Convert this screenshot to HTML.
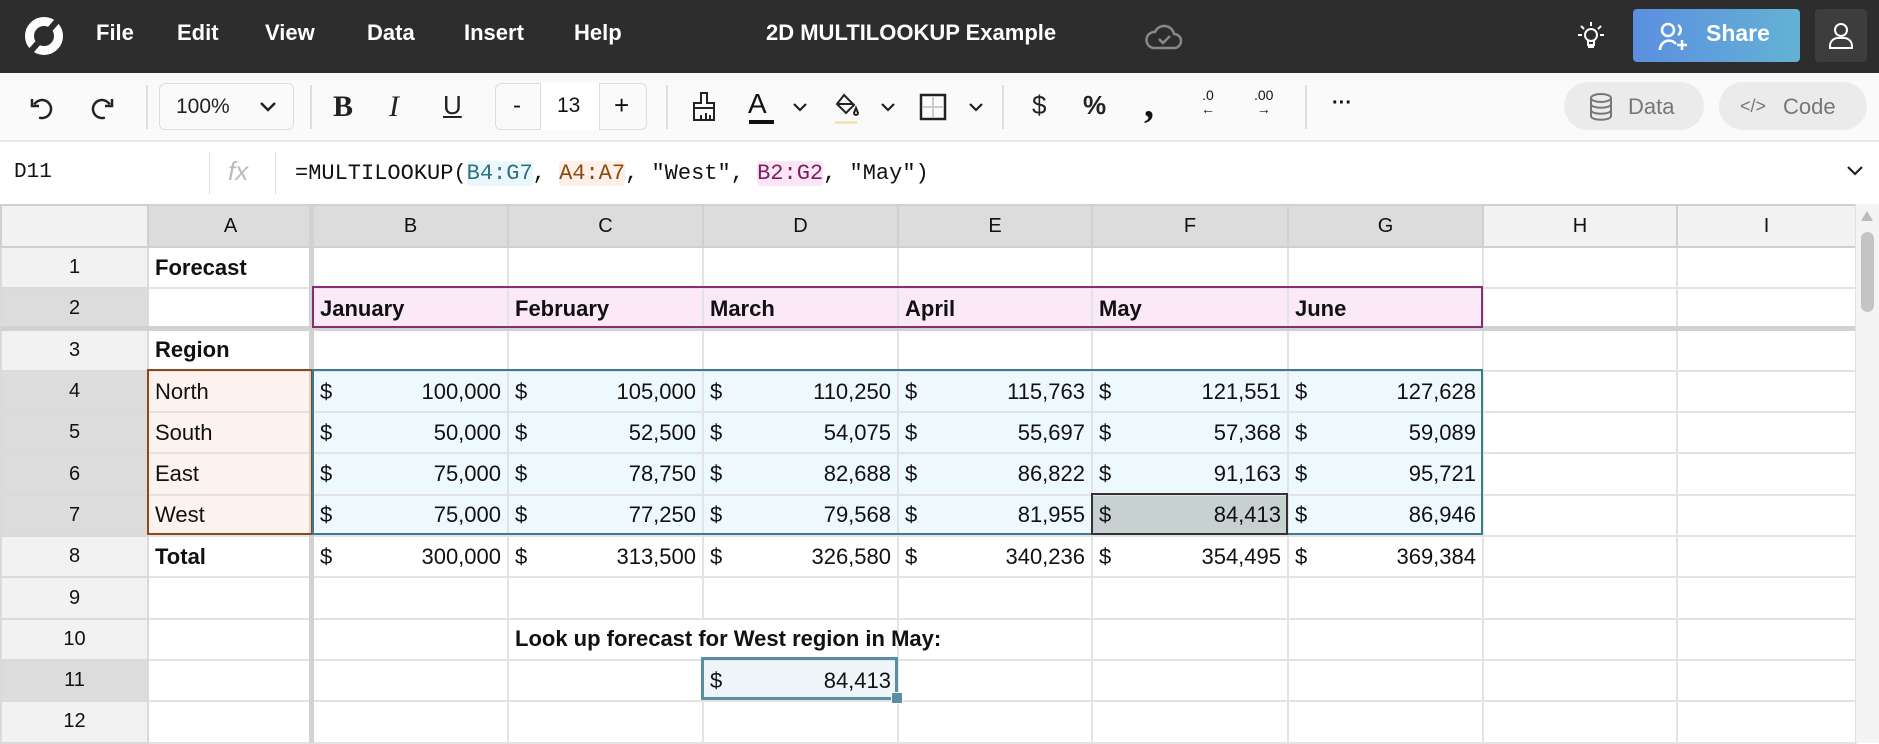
<!DOCTYPE html>
<html><head><meta charset="utf-8"><style>
*{margin:0;padding:0;box-sizing:border-box}
body{width:1879px;height:743px;overflow:hidden;background:#fff;font-family:"Liberation Sans",sans-serif;position:relative;color:#111}
.a{position:absolute}
#hdr{left:0;top:0;width:1879px;height:73px;background:#2d2d2d}
.m{top:20px;color:#fff;font-weight:bold;font-size:22px}
#tb{left:0;top:73px;width:1879px;height:69px;background:#fafafa;border-bottom:2px solid #e6e6e6}
.sep{top:85px;width:2px;height:44px;background:#dedede}
.ic{color:#222;font-size:26px}
#fb{left:0;top:142px;width:1879px;height:62px;background:#fff}
table{position:absolute;left:0;top:204px;width:1855px;border-collapse:collapse;table-layout:fixed}
td{height:41.3px;border:2px solid #e3e3e3;font-size:22px;padding:0 6px;white-space:nowrap;overflow:hidden;vertical-align:middle}
tr.h td{height:42px;background:#dcdcdc;text-align:center;font-size:20px;border-color:#d0d0d0}
td.n{background:#f2f2f2;text-align:center;font-size:20px;border-color:#dadada}
td.n.nd{background:#dcdcdc}
td.b{font-weight:bold}
td.r{text-align:right}
td.r span{float:left}
.pk td.p{background:#fce9f7}
td.o{background:#fcf3ee}
td.c{background:#edf9fc}
.ov{position:absolute;pointer-events:none}
</style></head><body>
<div id="hdr" class="a"></div>
<svg class="a" style="left:22px;top:14px" width="44" height="44" viewBox="0 0 44 44"><circle cx="22" cy="22" r="14.5" fill="none" stroke="#fff" stroke-width="9"/><line x1="36" y1="6" x2="8" y2="38" stroke="#2d2d2d" stroke-width="6"/></svg>
<div class="a m" style="left:96px">File</div>
<div class="a m" style="left:177px">Edit</div>
<div class="a m" style="left:265px">View</div>
<div class="a m" style="left:367px">Data</div>
<div class="a m" style="left:464px">Insert</div>
<div class="a m" style="left:574px">Help</div>
<div class="a m" style="left:766px">2D MULTILOOKUP Example</div>
<svg class="a" style="left:1144px;top:22px" width="40" height="30" viewBox="0 0 40 30"><path d="M10 26h20a7 7 0 0 0 0-14 10 10 0 0 0-19-2 8 8 0 0 0-1 16z" fill="none" stroke="#888" stroke-width="2.5"/><path d="M15 17l4 4 7-7" fill="none" stroke="#888" stroke-width="2.5"/></svg>
<svg class="a" style="left:1576px;top:20px" width="30" height="32" viewBox="0 0 30 32"><circle cx="15" cy="15" r="6" fill="none" stroke="#fff" stroke-width="2"/><path d="M12 21v4h6v-4M12 27h6M15 2v4M5 6l3 3M25 6l-3 3M2 15h4M24 15h4" stroke="#fff" stroke-width="2" fill="none"/></svg>
<div class="a" style="left:1633px;top:9px;width:167px;height:53px;border-radius:4px;background:linear-gradient(90deg,#5b8fe0,#63b2d3)"></div>
<svg class="a" style="left:1658px;top:22px" width="34" height="30" viewBox="0 0 34 30"><circle cx="10" cy="8" r="6" fill="none" stroke="#fff" stroke-width="2.5"/><path d="M2 28a9 9 0 0 1 16-6M20 3a6 6 0 0 1 0 10M24 18v10M19 23h10" fill="none" stroke="#fff" stroke-width="2.5"/></svg>
<div class="a" style="left:1706px;top:20px;color:#fff;font-weight:bold;font-size:23px">Share</div>
<div class="a" style="left:1815px;top:9px;width:52px;height:53px;border-radius:4px;background:#3d3d3d"></div>
<svg class="a" style="left:1828px;top:22px" width="26" height="28" viewBox="0 0 26 28"><circle cx="13" cy="8" r="6" fill="none" stroke="#fff" stroke-width="2"/><path d="M2 26v-2a8 8 0 0 1 8-8h6a8 8 0 0 1 8 8v2z" fill="none" stroke="#fff" stroke-width="2"/></svg>

<div id="tb" class="a"></div>
<svg class="a" style="left:28px;top:94px" width="28" height="28" viewBox="0 0 28 28"><path d="M8 8a9 9 0 1 1 0 14" fill="none" stroke="#222" stroke-width="2.5" transform="rotate(-20 14 14)"/><path d="M4 5v7h7" fill="none" stroke="#222" stroke-width="2.5"/></svg>
<svg class="a" style="left:88px;top:94px" width="28" height="28" viewBox="0 0 28 28"><path d="M20 8a9 9 0 1 0 0 14" fill="none" stroke="#222" stroke-width="2.5" transform="rotate(20 14 14)"/><path d="M24 5v7h-7" fill="none" stroke="#222" stroke-width="2.5"/></svg>
<div class="a sep" style="left:146px"></div>
<div class="a" style="left:159px;top:83px;width:135px;height:47px;border:1px solid #ddd;border-radius:6px;background:#fafafa"></div>
<div class="a" style="left:176px;top:95px;font-size:21px;color:#222">100%</div>
<svg class="a" style="left:258px;top:100px" width="20" height="14"><path d="M3 3l7 7 7-7" fill="none" stroke="#222" stroke-width="2.5"/></svg>
<div class="a sep" style="left:310px"></div>
<div class="a ic" style="left:333px;top:90px;font-weight:bold;font-family:'Liberation Serif',serif;font-size:30px">B</div>
<div class="a ic" style="left:389px;top:90px;font-style:italic;font-family:'Liberation Serif',serif;font-size:30px">I</div>
<div class="a ic" style="left:443px;top:90px;text-decoration:underline;font-size:26px">U</div>
<div class="a" style="left:495px;top:83px;width:152px;height:47px;border:1px solid #ddd;border-radius:6px;background:#fafafa"></div>
<div class="a" style="left:540px;top:83px;width:60px;height:47px;background:#fff;border-left:1px solid #ddd;border-right:1px solid #ddd"></div>
<div class="a" style="left:513px;top:92px;font-size:24px">-</div>
<div class="a" style="left:557px;top:94px;font-size:21px">13</div>
<div class="a" style="left:614px;top:90px;font-size:26px">+</div>
<div class="a sep" style="left:666px"></div>
<svg class="a" style="left:690px;top:91px" width="28" height="32" viewBox="0 0 28 32"><path d="M11 2h6v10h7v5H4v-5h7z M4 17v12h20V17 M11 24v5M16 22v7M20 24v5" fill="none" stroke="#222" stroke-width="2"/></svg>
<div class="a" style="left:748px;top:88px;font-size:28px">A</div>
<div class="a" style="left:749px;top:120px;width:25px;height:4px;background:#111"></div>
<svg class="a" style="left:792px;top:102px" width="16" height="12"><path d="M2 2l6 6 6-6" fill="none" stroke="#222" stroke-width="2.2"/></svg>
<svg class="a" style="left:834px;top:92px" width="26" height="28" viewBox="0 0 26 28"><path d="M10 3l10 10-8 8-9-9z M4 12h15M22 16l2 5a2 2 0 0 1-4 0z" fill="none" stroke="#222" stroke-width="2"/></svg>
<div class="a" style="left:835px;top:121px;width:22px;height:3px;background:#f5e3b5"></div>
<svg class="a" style="left:880px;top:102px" width="16" height="12"><path d="M2 2l6 6 6-6" fill="none" stroke="#222" stroke-width="2.2"/></svg>
<svg class="a" style="left:919px;top:93px" width="28" height="28"><rect x="2" y="2" width="24" height="24" fill="none" stroke="#222" stroke-width="2.5"/><path d="M14 3v22M3 14h22" stroke="#ccc" stroke-width="2"/></svg>
<svg class="a" style="left:968px;top:102px" width="16" height="12"><path d="M2 2l6 6 6-6" fill="none" stroke="#222" stroke-width="2.2"/></svg>
<div class="a sep" style="left:1002px"></div>
<div class="a ic" style="left:1032px;top:90px">$</div>
<div class="a ic" style="left:1083px;top:90px;font-weight:bold">%</div>
<div class="a" style="left:1144px;top:80px;font-size:40px;font-weight:bold;font-family:'Liberation Serif',serif">,</div>
<div class="a" style="left:1201px;top:88px;font-size:14px;line-height:14px;text-align:center">.0<br>&larr;</div>
<div class="a" style="left:1254px;top:88px;font-size:14px;line-height:14px;text-align:center">.00<br>&rarr;</div>
<div class="a sep" style="left:1305px"></div>
<div class="a" style="left:1332px;top:92px;font-size:20px;font-weight:bold">···</div>
<div class="a" style="left:1564px;top:82px;width:140px;height:48px;border-radius:24px;background:#ebebeb"></div>
<svg class="a" style="left:1587px;top:92px" width="28" height="30" viewBox="0 0 28 30"><ellipse cx="14" cy="6" rx="10" ry="4" fill="none" stroke="#777" stroke-width="2"/><path d="M4 6v18c0 5 20 5 20 0V6M4 12c0 5 20 5 20 0M4 18c0 5 20 5 20 0" fill="none" stroke="#777" stroke-width="2"/></svg>
<div class="a" style="left:1628px;top:94px;font-size:22px;color:#777">Data</div>
<div class="a" style="left:1719px;top:82px;width:148px;height:48px;border-radius:24px;background:#ebebeb"></div>
<div class="a" style="left:1740px;top:96px;font-size:18px;color:#777">&lt;/&gt;</div>
<div class="a" style="left:1783px;top:94px;font-size:22px;color:#777">Code</div>

<div id="fb" class="a"></div>
<div class="a" style="left:14px;top:161px;font-size:21px;font-family:'Liberation Mono',monospace">D11</div>
<div class="a" style="left:209px;top:152px;width:1px;height:42px;background:#ddd"></div>
<div class="a" style="left:228px;top:156px;font-size:26px;color:#bbb;font-style:italic">fx</div>
<div class="a" style="left:275px;top:152px;width:1px;height:42px;background:#ddd"></div>
<div class="a" style="left:295px;top:161px;font-size:22px;font-family:'Liberation Mono',monospace;white-space:pre">=MULTILOOKUP(<span style="background:#eaf8fc;color:#2e7185;border-radius:3px">B4:G7</span>, <span style="background:#fcf0e8;color:#8b4a10;border-radius:3px">A4:A7</span>, "West", <span style="background:#fbe6f5;color:#7c1e62;border-radius:3px">B2:G2</span>, "May")</div>
<svg class="a" style="left:1846px;top:164px" width="18" height="14"><path d="M2 3l7 7 7-7" fill="none" stroke="#222" stroke-width="2.2"/></svg>

<table>
<colgroup><col style="width:147px"><col style="width:165px"><col style="width:195px"><col style="width:195px"><col style="width:195px"><col style="width:194px"><col style="width:196px"><col style="width:195px"><col style="width:194px"><col style="width:179px"></colgroup>
<tr class="h"><td style="background:#f2f2f2"></td><td>A</td><td>B</td><td>C</td><td>D</td><td>E</td><td>F</td><td>G</td><td style="background:#f2f2f2">H</td><td style="background:#f2f2f2">I</td></tr>
<tr><td class="n">1</td><td class="b">Forecast</td><td></td><td></td><td></td><td></td><td></td><td></td><td></td><td></td></tr>
<tr class="pk"><td class="n nd">2</td><td></td><td class="b p">January</td><td class="b p">February</td><td class="b p">March</td><td class="b p">April</td><td class="b p">May</td><td class="b p">June</td><td></td><td></td></tr>
<tr><td class="n">3</td><td class="b">Region</td><td></td><td></td><td></td><td></td><td></td><td></td><td></td><td></td></tr>
<tr><td class="n nd">4</td><td class="o">North</td><td class="r c"><span>$</span>100,000</td><td class="r c"><span>$</span>105,000</td><td class="r c"><span>$</span>110,250</td><td class="r c"><span>$</span>115,763</td><td class="r c"><span>$</span>121,551</td><td class="r c"><span>$</span>127,628</td><td></td><td></td></tr>
<tr><td class="n nd">5</td><td class="o">South</td><td class="r c"><span>$</span>50,000</td><td class="r c"><span>$</span>52,500</td><td class="r c"><span>$</span>54,075</td><td class="r c"><span>$</span>55,697</td><td class="r c"><span>$</span>57,368</td><td class="r c"><span>$</span>59,089</td><td></td><td></td></tr>
<tr><td class="n nd">6</td><td class="o">East</td><td class="r c"><span>$</span>75,000</td><td class="r c"><span>$</span>78,750</td><td class="r c"><span>$</span>82,688</td><td class="r c"><span>$</span>86,822</td><td class="r c"><span>$</span>91,163</td><td class="r c"><span>$</span>95,721</td><td></td><td></td></tr>
<tr><td class="n nd">7</td><td class="o">West</td><td class="r c"><span>$</span>75,000</td><td class="r c"><span>$</span>77,250</td><td class="r c"><span>$</span>79,568</td><td class="r c"><span>$</span>81,955</td><td class="r c" style="background:#c8d1d1"><span>$</span>84,413</td><td class="r c"><span>$</span>86,946</td><td></td><td></td></tr>
<tr><td class="n">8</td><td class="b">Total</td><td class="r"><span>$</span>300,000</td><td class="r"><span>$</span>313,500</td><td class="r"><span>$</span>326,580</td><td class="r"><span>$</span>340,236</td><td class="r"><span>$</span>354,495</td><td class="r"><span>$</span>369,384</td><td></td><td></td></tr>
<tr><td class="n">9</td><td></td><td></td><td></td><td></td><td></td><td></td><td></td><td></td><td></td></tr>
<tr><td class="n">10</td><td></td><td></td><td class="b" style="overflow:visible;border-right-color:transparent">Look up forecast for West region in May:</td><td></td><td></td><td></td><td></td><td></td><td></td></tr>
<tr><td class="n nd">11</td><td></td><td></td><td></td><td class="r" style="background:#eef6f9"><span>$</span>84,413</td><td></td><td></td><td></td><td></td><td></td></tr>
<tr><td class="n">12</td><td></td><td></td><td></td><td></td><td></td><td></td><td></td><td></td><td></td></tr>
</table>
<div class="ov" style="left:309px;top:204px;width:5px;height:539px;background:#d2d2d2"></div>
<div class="ov" style="left:0;top:326px;width:1855px;height:5px;background:#d2d2d2"></div>
<div class="ov" style="left:312px;top:286px;width:1171px;height:42px;border:2px solid #8a2c70"></div>
<div class="ov" style="left:147px;top:369px;width:166px;height:166px;border:2px solid #8b4a1a"></div>
<div class="ov" style="left:312px;top:369px;width:1171px;height:166px;border:2px solid #3f7b8c"></div>
<div class="ov" style="left:1091px;top:493px;width:197px;height:42px;border:2px solid #333"></div>
<div class="ov" style="left:701px;top:657px;width:197px;height:43px;border:3px solid #5b8ea0"></div>
<div class="ov" style="left:891px;top:692px;width:12px;height:12px;background:#5b8ea0;border:1px solid #fff"></div>
<div class="a" style="left:1855px;top:204px;width:24px;height:539px;background:#f4f4f4;border-left:1px solid #e0e0e0"></div>
<svg class="a" style="left:1860px;top:210px" width="14" height="12"><path d="M7 1l6 10H1z" fill="#bbb"/></svg>
<div class="a" style="left:1861px;top:232px;width:13px;height:80px;border-radius:7px;background:#c4c4c4"></div>
</body></html>
